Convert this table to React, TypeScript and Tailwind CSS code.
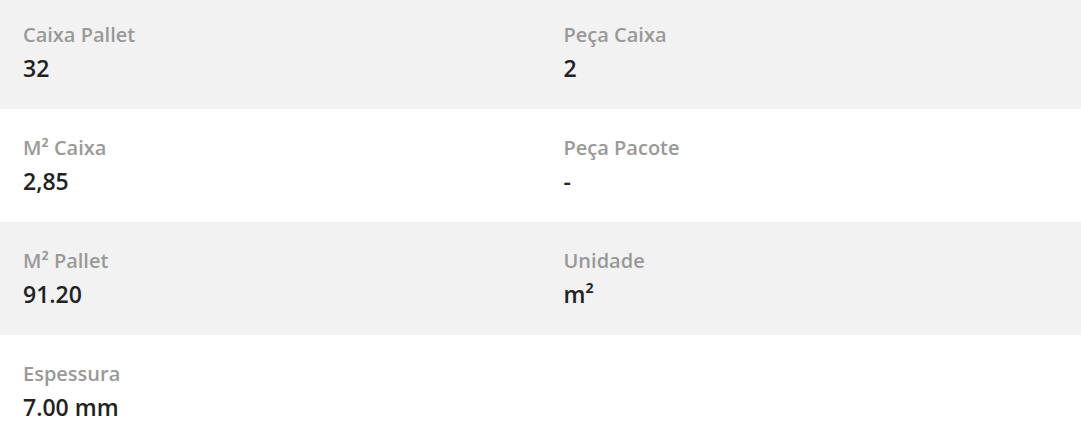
const rows = [
  [
    { label: 'Caixa Pallet', value: '32' },
    { label: 'Peça Caixa', value: '2' },
  ],
  [
    { label: 'M² Caixa', value: '2,85' },
    { label: 'Peça Pacote', value: '-' },
  ],
  [
    { label: 'M² Pallet', value: '91.20' },
    { label: 'Unidade', value: 'm²' },
  ],
  [{ label: 'Espessura', value: '7.00 mm' }],
];

function Field({ label, value }: { label: string; value: string }) {
  return (
    <div className="pl-[23px] flex flex-col">
      <span className="text-[20px] leading-[26px] font-semibold text-[#999999]">{label}</span>
      <span className="text-[23px] leading-[30px] font-semibold text-[#222222] mt-[5px]">{value}</span>
    </div>
  );
}

export default function App() {
  return (
    <div className="w-[1081px] h-[435px] overflow-hidden bg-white" style={{ fontFamily: '"Open Sans", sans-serif' }}>
      {rows.map((row, i) => (
        <div
          key={i}
          className={`grid grid-cols-2 ${i % 2 === 0 ? 'bg-[#f2f2f2]' : 'bg-white'} ${i === 0 ? 'h-[109px] pt-[22px]' : 'h-[113px] pt-[26px]'}`}
        >
          {row.map((f) => (
            <Field key={f.label} label={f.label} value={f.value} />
          ))}
        </div>
      ))}
    </div>
  );
}
